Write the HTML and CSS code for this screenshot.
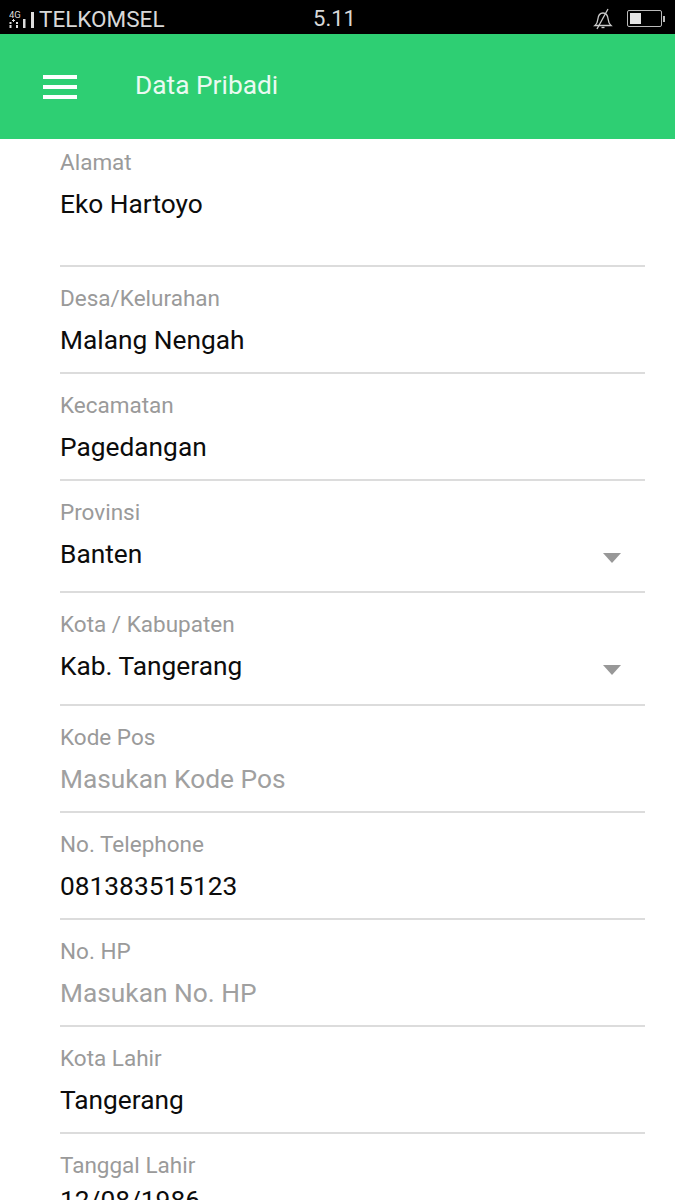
FILE: index.html
```html
<!DOCTYPE html>
<html lang="en">
<head>
    <meta charset="UTF-8">
    <meta name="viewport" content="width=device-width, initial-scale=1.0">
    <title>Data Pribadi</title>
    <link rel="stylesheet" href="styles.css">
</head>
<body>
    <div class="status-bar">
        <div class="status-left">
            <svg class="signal-icon" width="26" height="18" viewBox="0 0 26 18">
                <text x="0" y="8" class="signal-text">4G</text>
                <path d="M4.500 9v3M3 10.500h3" stroke="#ddd" stroke-width="1"/>
                <rect x="0.500" y="12" width="2" height="2" fill="#ddd"/>
                <rect x="0.500" y="15" width="2" height="3" fill="#ddd"/>
                <rect x="7" y="12" width="2" height="2" fill="#ddd"/>
                <rect x="7" y="15" width="2" height="3" fill="#ddd"/>
                <rect x="14" y="9" width="2.500" height="9" fill="#ddd"/>
                <rect x="22" y="2" width="3" height="16" fill="#ddd"/>
            </svg>
            <span class="carrier">TELKOMSEL</span>
        </div>
        <span class="clock">5.11</span>
        <div class="status-right">
            <svg width="20" height="22" viewBox="0 0 20 22" fill="none" stroke="#ccc" stroke-width="1.3">
                <path d="M2 17.500c2-1.500 2.500-3 2.800-6 .4-4 2-6.500 5.200-6.500s4.800 2.500 5.200 6.500c.3 3 1 4.500 2.800 6z"/>
                <path d="M8.500 19.500h3"/>
                <path d="M15 1 4 21"/>
            </svg>
            <div class="battery">
                <div class="battery-level"></div>
            </div>
            <div class="battery-tip"></div>
        </div>
    </div>

    <div class="app-bar">
        <div class="menu-icon">
            <span></span>
            <span></span>
            <span></span>
        </div>
        <div class="app-title">Data Pribadi</div>
    </div>

    <div class="form">
        <div class="field field-area">
            <div class="field-label">Alamat</div>
            <div class="field-value">Eko Hartoyo</div>
        </div>
        <div class="field">
            <div class="field-label">Desa/Kelurahan</div>
            <div class="field-value">Malang Nengah</div>
        </div>
        <div class="field">
            <div class="field-label">Kecamatan</div>
            <div class="field-value">Pagedangan</div>
        </div>
        <div class="field field-select">
            <div class="field-label">Provinsi</div>
            <div class="select-row">
                <div class="field-value">Banten</div>
                <div class="select-arrow"></div>
            </div>
        </div>
        <div class="field field-select field-select-tall">
            <div class="field-label">Kota / Kabupaten</div>
            <div class="select-row">
                <div class="field-value">Kab. Tangerang</div>
                <div class="select-arrow"></div>
            </div>
        </div>
        <div class="field">
            <div class="field-label">Kode Pos</div>
            <div class="field-value placeholder">Masukan Kode Pos</div>
        </div>
        <div class="field">
            <div class="field-label">No. Telephone</div>
            <div class="field-value">081383515123</div>
        </div>
        <div class="field">
            <div class="field-label">No. HP</div>
            <div class="field-value placeholder">Masukan No. HP</div>
        </div>
        <div class="field">
            <div class="field-label">Kota Lahir</div>
            <div class="field-value">Tangerang</div>
        </div>
        <div class="field">
            <div class="field-label">Tanggal Lahir</div>
            <div class="field-value field-value-date">12/08/1986</div>
        </div>
    </div>
</body>
</html>
```
FILE: styles.css
```css
*{
    box-sizing: border-box;
}
html, body{
    height: 1200px;
    overflow: hidden;
}
body{
    margin: 0;
    background-color: white;
    font-family: Roboto, "Liberation Sans", sans-serif;
}
/*
* Status Bar
*/
.status-bar{
    display: grid;
    grid-template-columns: 1fr auto 1fr;
    align-items: center;
    height: 34px;
    padding: 0 9px;
    background-color: black;
    color: #d8d8d8;
}
.status-left{
    display: flex;
    align-items: center;
    gap: 4px;
}
.signal-text{
    font-size: 9.5px;
    fill: #ddd;
}
.carrier{
    font-size: 22.5px;
    line-height: 36px;
}
.clock{
    margin-right: 6px;
    font-size: 22px;
    line-height: 37px;
}
.status-right{
    display: flex;
    align-items: center;
    justify-content: flex-end;
    padding-right: 1px;
}
.battery{
    width: 35px;
    height: 17px;
    margin-left: 14px;
    padding: 2px;
    border: 1px solid #bbb;
    border-radius: 2px;
}
.battery-level{
    width: 11px;
    height: 100%;
    background-color: #e4e4e4;
}
.battery-tip{
    width: 2px;
    height: 6px;
    margin-left: 1px;
    background-color: #bbb;
}
/*
* App Bar
*/
.app-bar{
    display: flex;
    align-items: center;
    height: 105px;
    padding-left: 43px;
    background-color: #2ecf73;
}
.menu-icon{
    display: flex;
    flex-direction: column;
    gap: 6px;
    width: 34px;
    margin-right: 58px;
}
.menu-icon span{
    height: 4px;
    background-color: white;
}
.app-title{
    padding-bottom: 4px;
    color: #eafaf1;
    font-size: 26.3px;
}
/*
* Form
*/
.form{
    padding: 0 30px 0 60px;
}
.field{
    height: 107px;
    padding-top: 16px;
    border-bottom: 2px solid #dcdcdc;
}
.field-area{
    height: 128px;
    padding-top: 8px;
}
.field-select{
    height: 112px;
}
.field-select-tall{
    height: 113px;
}
.field-label{
    color: #9a9a9a;
    font-size: 22.5px;
    line-height: 30px;
}
.field-value{
    color: #0c0c0c;
    font-size: 26.3px;
    line-height: 54px;
}
.field-value-date{
    margin-top: -7px;
}
.placeholder{
    color: #a0a0a0;
}
.select-row{
    display: flex;
    align-items: center;
    justify-content: space-between;
    padding-right: 24px;
}
.select-arrow{
    width: 0;
    height: 0;
    margin-top: 8px;
    border-left: 9.500px solid transparent;
    border-right: 9.500px solid transparent;
    border-top: 10px solid #989898;
}
```
